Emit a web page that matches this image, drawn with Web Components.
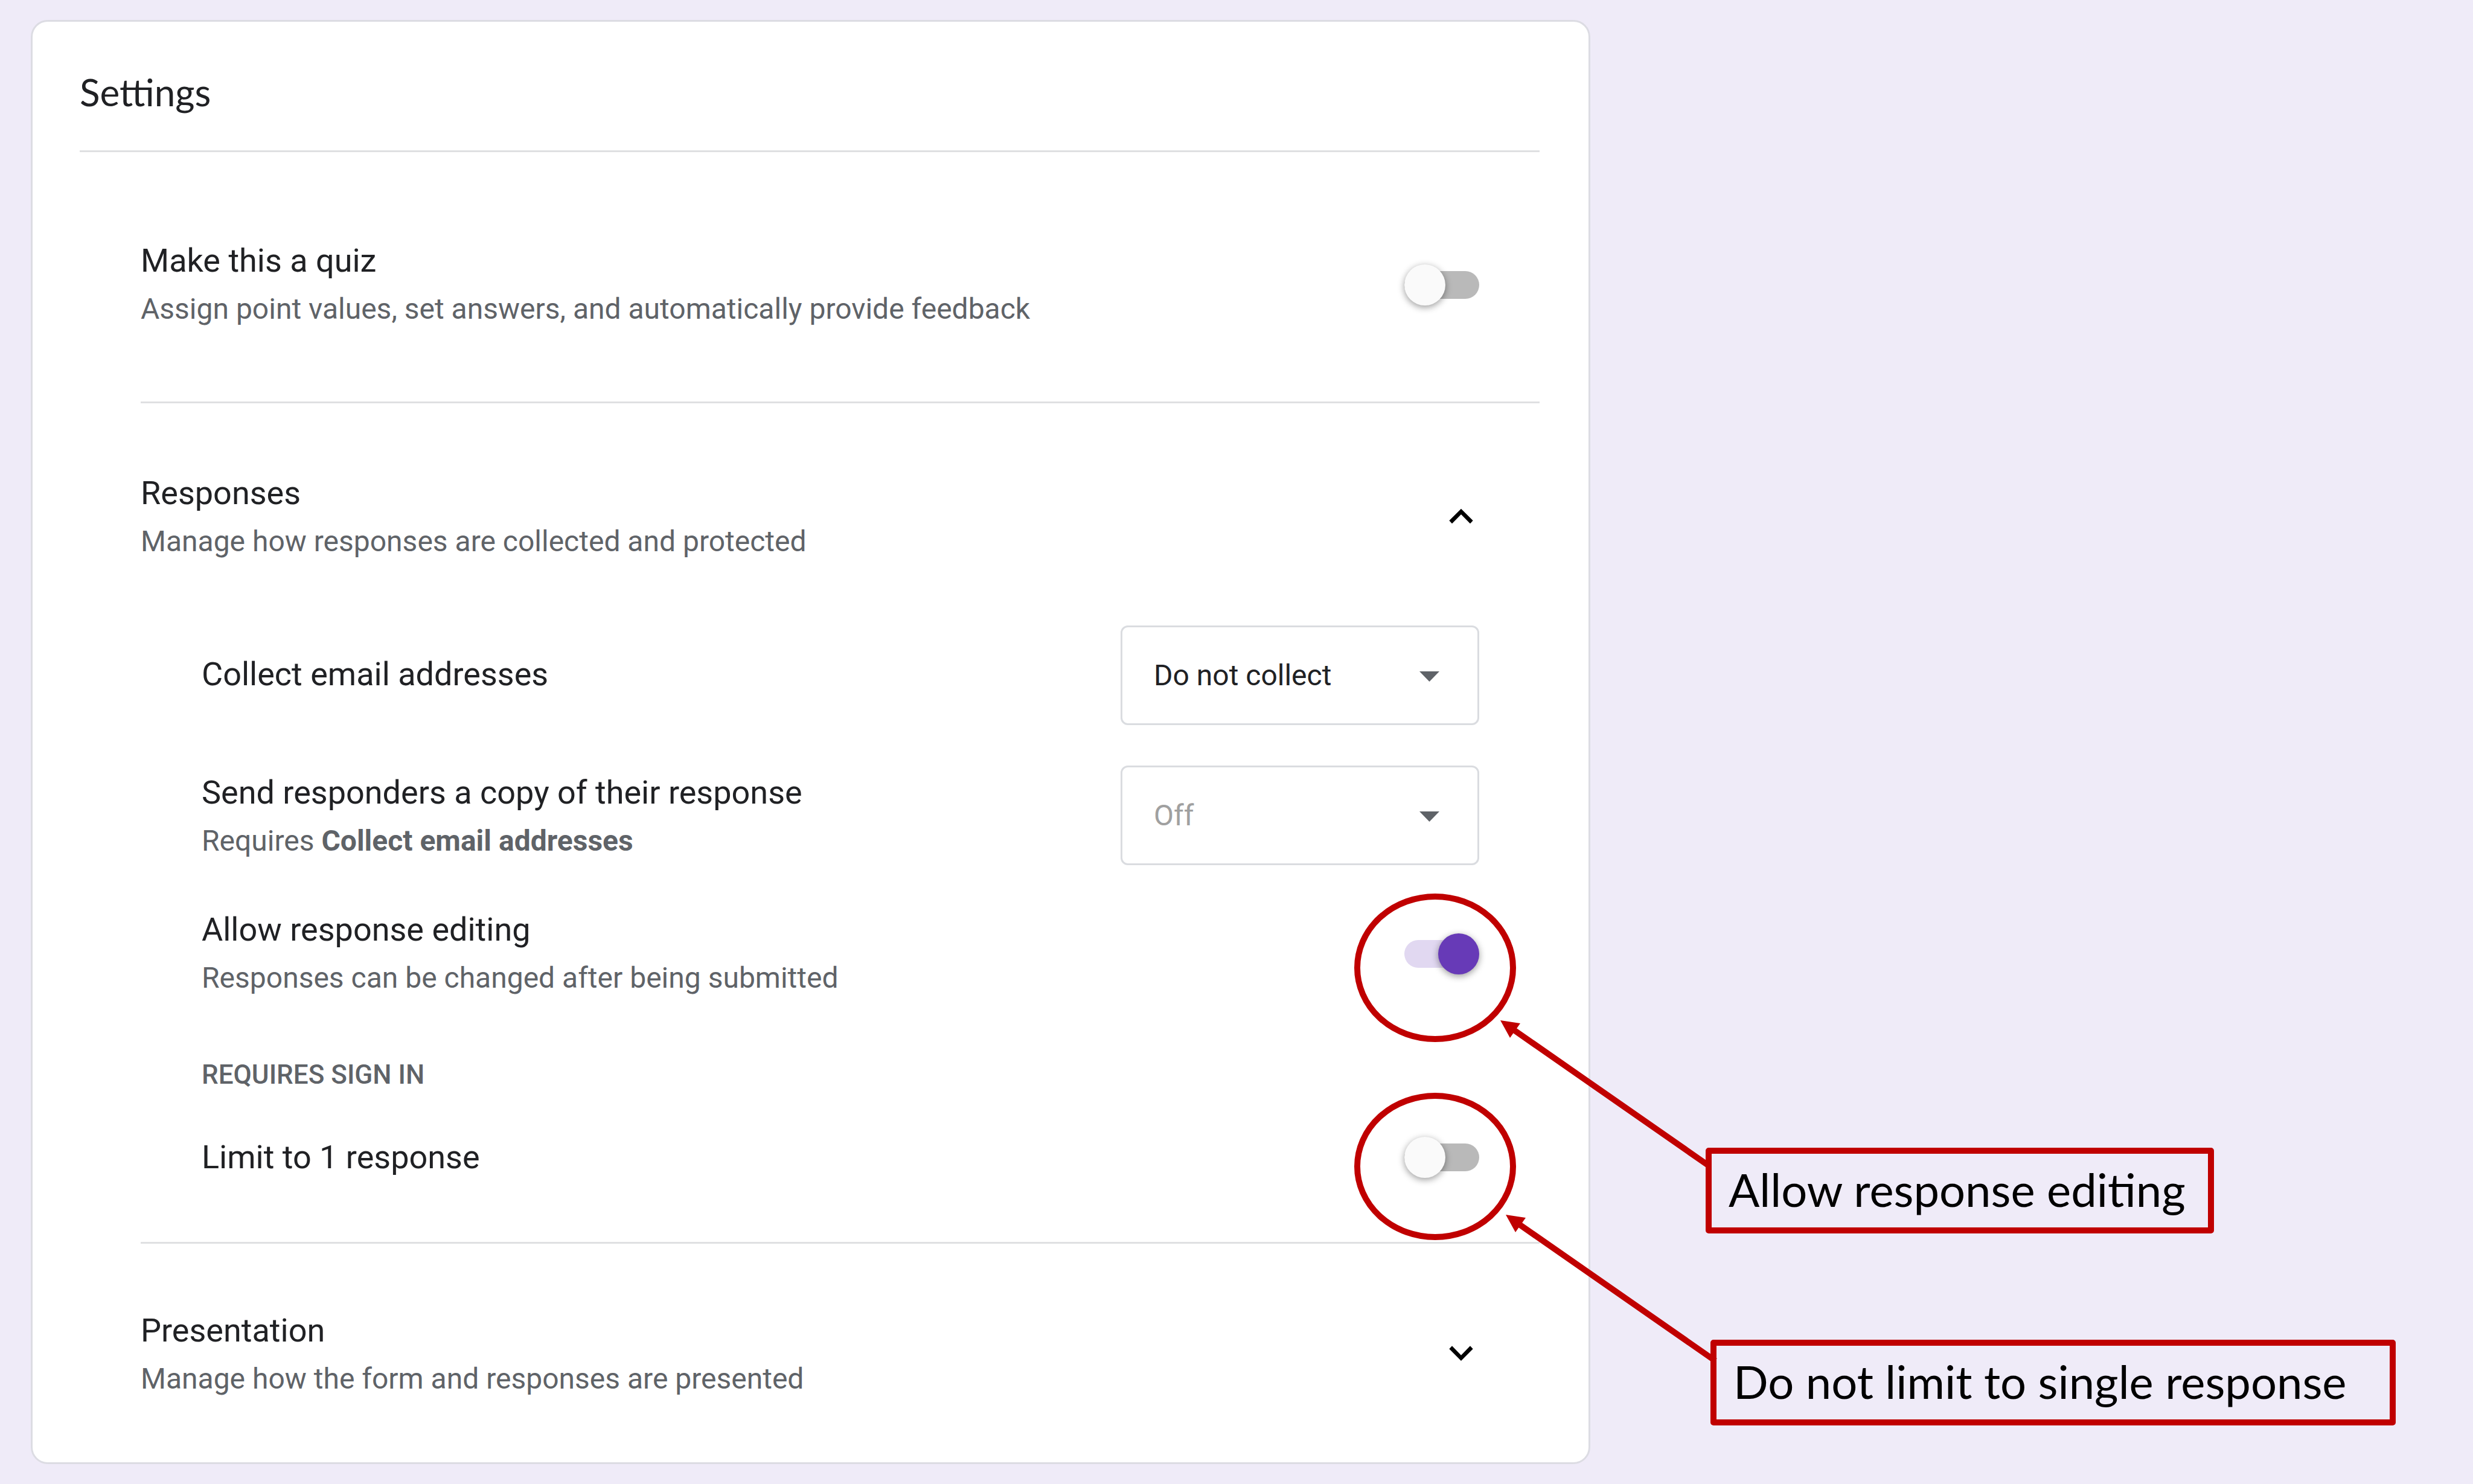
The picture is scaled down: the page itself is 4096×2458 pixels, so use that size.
<!DOCTYPE html>
<html lang="en">
<head>
<meta charset="utf-8">
<title>Settings</title>
<style>
  body {
    margin: 0;
    background: #efebf8;
    color: #202124;
    font-family: Roboto, "Liberation Sans", sans-serif;
  }
</style>
</head>
<body>
<settings-page>
  <settings-card heading="Settings">
    <settings-section>
      <setting-row control="toggle" label="Make this a quiz">Assign point values, set answers, and automatically provide feedback</setting-row>
    </settings-section>
    <settings-section class="responses">
      <setting-row control="expander" label="Responses" open>Manage how responses are collected and protected</setting-row>
      <settings-group slot="group">
        <setting-row control="select" label="Collect email addresses" options="Do not collect|Verified|Responder input" bare></setting-row>
        <setting-row control="select" label="Send responders a copy of their response" options="Off|When requested|Always" disabled>Requires <b>Collect email addresses</b></setting-row>
        <setting-row control="toggle" label="Allow response editing" checked>Responses can be changed after being submitted</setting-row>
        <group-caption>REQUIRES SIGN IN</group-caption>
        <setting-row control="toggle" label="Limit to 1 response" bare></setting-row>
      </settings-group>
    </settings-section>
    <settings-section class="presentation">
      <setting-row control="expander" label="Presentation">Manage how the form and responses are presented</setting-row>
    </settings-section>
  </settings-card>
  <annotation-layer slot="notes">
    <note-callout class="first">Allow response editing</note-callout>
    <note-callout class="second">Do not limit to single response</note-callout>
  </annotation-layer>
</settings-page>

<script>
  const define = (name, html, setup) => {
    const template = document.createElement('template');
    template.innerHTML = html;
    customElements.define(name, class extends HTMLElement {
      constructor() {
        super();
        this.attachShadow({ mode: 'open' }).append(template.content.cloneNode(true));
      }
      connectedCallback() {
        if (setup) setup(this, this.shadowRoot);
      }
    });
  };

  define('settings-page', `
    <style>
      :host { display: block; position: relative; min-height: 100vh; box-sizing: border-box; padding: 33px 51px; overflow: hidden; }
      main { display: grid; grid-template-columns: minmax(0, 2583px) 1fr; }
    </style>
    <main><slot></slot></main>
    <slot name="notes"></slot>
  `);

  define('settings-card', `
    <style>
      :host { display: block; box-sizing: border-box; padding: 0 81px 0 78px; background: #fff; border: 3px solid #dcdce3; border-radius: 28px; }
      h1 { margin: 0; padding: 76px 0 57px; border-bottom: 3px solid #dfe0e2; font: 400 62px/80px Lato, Roboto, sans-serif; }
      .sections { display: flex; flex-direction: column; padding-left: 101px; }
      ::slotted(settings-section) { padding: 140px 0 113px; }
      ::slotted(.responses) { padding: 109px 0 100px; border-top: 3px solid #dfe0e2; border-bottom: 3px solid #dfe0e2; }
      ::slotted(.presentation) { padding: 104px 0 98px; }
    </style>
    <h1></h1>
    <div class="sections"><slot></slot></div>
  `, (host, root) => {
    root.querySelector('h1').textContent = host.getAttribute('heading');
  });

  define('settings-section', `
    <style>
      :host { display: block; }
      section { display: flex; flex-direction: column; gap: 99px; padding-right: 100px; }
    </style>
    <section><slot></slot><slot name="group"></slot></section>
  `);

  define('settings-group', `
    <style>
      :host { display: flex; flex-direction: column; gap: 67px; padding-left: 101px; }
    </style>
    <slot></slot>
  `);

  define('group-caption', `
    <style>
      :host { display: block; padding-top: 23px; font-size: 44px; line-height: 60px; font-weight: 500; color: #5f6368; }
    </style>
    <slot></slot>
  `);

  const toggleMarkup = `
    <style>
      input { appearance: none; flex: none; display: grid; align-items: center; width: 124px; height: 68px; margin: 0; }
      input::before, input::after { content: ""; grid-area: 1 / 1; }
      input::before { height: 46px; border-radius: 23px; background: #b9b9b9; }
      input::after { width: 68px; height: 68px; border-radius: 50%; background: #fafafa; box-shadow: 0 3px 12px rgba(0, 0, 0, .4); }
      input:checked::before { background: #e1d8f1; }
      input:checked::after { justify-self: end; background: #673ab7; }
    </style>
    <input id="control" type="checkbox" role="switch">`;

  const selectMarkup = `
    <style>
      .box { flex: none; display: grid; align-items: center; width: 594px; }
      select, svg { grid-area: 1 / 1; }
      select { appearance: none; box-sizing: border-box; width: 100%; height: 165px; margin: 0; padding: 0 110px 0 52px; border: 3px solid #dadce0; border-radius: 12px; background: #fff; color: #202124; font: 48px/80px Roboto, sans-serif; opacity: 1; }
      select:disabled { color: #a0a0a0; opacity: 1; }
      svg { justify-self: end; width: 33px; height: 20px; margin-right: 66px; fill: #5f6368; pointer-events: none; }
    </style>
    <span class="box">
      <select id="control"></select>
      <svg viewBox="0 0 33 20" aria-hidden="true"><path d="M0 3h33L16.500 20z"/></svg>
    </span>`;

  const expanderMarkup = `
    <style>
      button { flex: none; width: 80px; height: 80px; margin: 0 -10px 0 0; padding: 0; border: 0; background: none; }
      svg { display: block; width: 80px; height: 80px; }
    </style>
    <button id="control" type="button"><svg viewBox="0 0 24 24" aria-hidden="true"><path/></svg></button>`;

  define('setting-row', `
    <style>
      :host { display: flex; align-items: center; justify-content: space-between; gap: 40px; }
      :host([control="select"]) { align-items: end; }
      :host([control="select"][bare]) { align-items: baseline; }
      label { display: block; font-size: 54px; line-height: 80px; color: #202124; }
      p { margin: 0; font-size: 48px; line-height: 80px; color: #5f6368; }
      :host([bare]) p { display: none; }
    </style>
    <div class="text"><label for="control"></label><p><slot></slot></p></div>
  `, (host, root) => {
    if (root.querySelector('#control')) return;
    const kind = host.getAttribute('control');
    const part = document.createElement('template');
    part.innerHTML = { toggle: toggleMarkup, select: selectMarkup, expander: expanderMarkup }[kind];
    root.append(part.content);
    const name = host.getAttribute('label');
    root.querySelector('label').textContent = name;
    const control = root.querySelector('#control');
    if (kind === 'toggle') control.checked = host.hasAttribute('checked');
    if (kind === 'select') {
      for (const text of host.getAttribute('options').split('|')) control.add(new Option(text));
      control.disabled = host.hasAttribute('disabled');
    }
    if (kind === 'expander') {
      const open = host.hasAttribute('open');
      control.setAttribute('aria-expanded', open);
      control.querySelector('path').setAttribute('d', open
        ? 'M12 7.700l-5.900 5.900 1.400 1.500L12 10.500l4.500 4.600 1.400-1.500z'
        : 'M12 15l5.900-5.900-1.400-1.500L12 12.200 7.500 7.600 6.100 9.100z');
    }
  });

  define('annotation-layer', `
    <style>
      :host { position: absolute; inset: 0; pointer-events: none; }
      svg { position: absolute; top: 0; left: 0; width: 4096px; height: 2458px; }
      ::slotted(.first) { position: absolute; left: 2825px; top: 1901px; }
      ::slotted(.second) { position: absolute; left: 2833px; top: 2219px; width: 1135px; }
    </style>
    <svg viewBox="0 0 4096 2458" fill="none" stroke="#c00000" stroke-width="10" aria-hidden="true">
      <ellipse cx="2377" cy="1603" rx="129" ry="118"/>
      <ellipse cx="2377" cy="1932" rx="129" ry="117"/>
      <path d="M2506 1705L2832 1932M2515 2027L2841 2254"/>
      <path fill="#c00000" stroke="none" d="M2485 1690l33 5-17 24zM2494 2012l33 5-17 24z"/>
    </svg>
    <slot></slot>
  `);

  define('note-callout', `
    <style>
      :host { display: block; box-sizing: border-box; padding: 0 37px 4px 28px; border: 10px solid #c00000; border-radius: 5px; color: #000; font: 76px/118px Lato, sans-serif; white-space: nowrap; }
    </style>
    <slot></slot>
  `);
</script>
</body>
</html>
